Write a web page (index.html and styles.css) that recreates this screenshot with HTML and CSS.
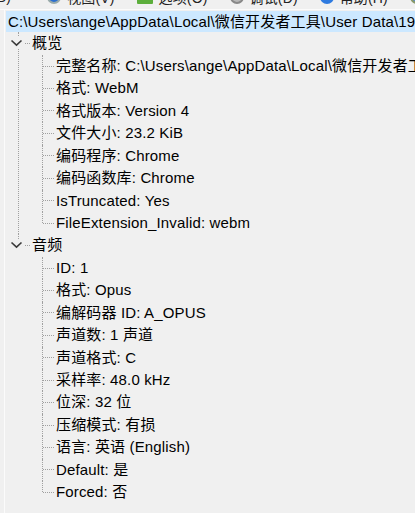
FILE: index.html
```html
<!DOCTYPE html>
<html lang="zh-CN">
<head>
    <meta charset="UTF-8" />
    <title>MediaInfo</title>
    <link rel="stylesheet" href="styles.css">
</head>
<body>
    <div class="toolbar">
        <div class="tools">
            <span class="tool first">(B)</span>
            <span class="tool"><i class="ico ico-view"></i>视图(V)</span>
            <span class="tool"><i class="ico ico-opt"></i>选项(O)</span>
            <span class="tool"><i class="ico ico-gear"></i>调试(D)</span>
            <span class="tool"><i class="ico ico-help"></i>帮助(H)</span>
            <span class="tool"><i class="ico ico-web"></i></span>
        </div>
    </div>
    <div class="panel">
        <div class="root-row"><span class="label selected">C:\Users\ange\AppData\Local\微信开发者工具\User Data\1959e4fd\WeappCache</span></div>
        <ul class="tree level1">
            <li>
                <div class="row">
                    <span class="stub"></span>
                    <span class="twisty"><svg width="16" height="12" viewBox="0 0 16 12"><path d="M2.5 3.5 L7.5 8.2 L12.5 3.5" fill="none" stroke="#3a3a3a" stroke-width="1.6"/></svg></span>
                    <span class="label">概览</span>
                </div>
                <ul class="tree level2">
                    <li><div class="row"><span class="stub"></span><span class="label">完整名称: C:\Users\ange\AppData\Local\微信开发者工具\User Data</span></div></li>
                    <li><div class="row"><span class="stub"></span><span class="label">格式: WebM</span></div></li>
                    <li><div class="row"><span class="stub"></span><span class="label">格式版本: Version 4</span></div></li>
                    <li><div class="row"><span class="stub"></span><span class="label">文件大小: 23.2 KiB</span></div></li>
                    <li><div class="row"><span class="stub"></span><span class="label">编码程序: Chrome</span></div></li>
                    <li><div class="row"><span class="stub"></span><span class="label">编码函数库: Chrome</span></div></li>
                    <li><div class="row"><span class="stub"></span><span class="label">IsTruncated: Yes</span></div></li>
                    <li><div class="row"><span class="stub"></span><span class="label">FileExtension_Invalid: webm</span></div></li>
                </ul>
            </li>
            <li>
                <div class="row">
                    <span class="stub"></span>
                    <span class="twisty"><svg width="16" height="12" viewBox="0 0 16 12"><path d="M2.5 3.5 L7.5 8.2 L12.5 3.5" fill="none" stroke="#3a3a3a" stroke-width="1.6"/></svg></span>
                    <span class="label">音频</span>
                </div>
                <ul class="tree level2">
                    <li><div class="row"><span class="stub"></span><span class="label">ID: 1</span></div></li>
                    <li><div class="row"><span class="stub"></span><span class="label">格式: Opus</span></div></li>
                    <li><div class="row"><span class="stub"></span><span class="label">编解码器 ID: A_OPUS</span></div></li>
                    <li><div class="row"><span class="stub"></span><span class="label">声道数: 1 声道</span></div></li>
                    <li><div class="row"><span class="stub"></span><span class="label">声道格式: C</span></div></li>
                    <li><div class="row"><span class="stub"></span><span class="label">采样率: 48.0 kHz</span></div></li>
                    <li><div class="row"><span class="stub"></span><span class="label">位深: 32 位</span></div></li>
                    <li><div class="row"><span class="stub"></span><span class="label">压缩模式: 有损</span></div></li>
                    <li><div class="row"><span class="stub"></span><span class="label">语言: 英语 (English)</span></div></li>
                    <li><div class="row"><span class="stub"></span><span class="label">Default: 是</span></div></li>
                    <li><div class="row"><span class="stub"></span><span class="label">Forced: 否</span></div></li>
                </ul>
            </li>
        </ul>
    </div>
</body>
</html>
```

FILE: styles.css
```css
*{
    margin:0;
    padding:0;
    list-style:none;
    box-sizing:border-box;
}
html,body{
    width:415px;
    height:513px;
    overflow:hidden;
    background:#f0f0f0;
}
body{
    font-family:"Liberation Sans","Noto Sans CJK SC",sans-serif;
    font-size:15px;
    letter-spacing:0.15px;
    color:#000;
}
.toolbar{
    height:10px;
    overflow:hidden;
    border-bottom:1px solid #fbfbfb;
}
.tools{
    display:flex;
    align-items:center;
    height:20px;
    margin-top:-13px;
    margin-left:-8px;
    white-space:nowrap;
    font-size:14px;
    color:#222;
}
.tool{
    display:flex;
    align-items:center;
    gap:6px;
    margin-right:22px;
}
.tool.first{
    margin-right:36px;
}
.ico{
    display:inline-block;
    width:14px;
    height:14px;
    border-radius:50%;
}
.ico-view{
    background:#2a6fd0;
    border:2px solid #9aa;
}
.ico-opt{
    border-radius:1px;
    background:linear-gradient(#ddd 60%,#5cae3c 60%);
    width:16px;
}
.ico-gear{
    background:#b8b8b8;
    border:2px solid #888;
}
.ico-help{
    background:#2f7be0;
}
.ico-web{
    background:#5b8fc9;
    border:2px solid #8a9a6a;
}
.panel{
    margin-left:4px;
    border-left:1px solid #fbfbfb;
    height:503px;
}
.root-row{
    height:22.45px;
    display:flex;
    align-items:center;
    white-space:nowrap;
}
.label{
    white-space:nowrap;
    line-height:22.45px;
}
.selected{
    margin-left:1px;
    padding-left:2px;
    line-height:21px;
    background:#cce8ff;
}
.level1{
    padding-left:13px;
}
.level2{
    padding-left:23px;
}
.tree li{
    border-left:1px dotted #a0a0a0;
}
.tree li:last-child{
    border-left:1px solid transparent;
}
.row{
    position:relative;
    display:flex;
    height:22.45px;
}
.stub{
    flex-shrink:0;
    width:11px;
    margin-right:2px;
    display:flex;
    flex-direction:column;
}
.stub::before{
    content:"";
    flex:1;
}
.stub::after{
    content:"";
    flex:1;
    border-top:1px dotted #a0a0a0;
}
.tree li:last-child > .row > .stub::before{
    margin-left:-1px;
    border-left:1px dotted #a0a0a0;
}
.twisty{
    position:absolute;
    left:-10px;
    top:5px;
    width:16px;
    height:12px;
    background:#f0f0f0;
}
.twisty svg{
    display:block;
}
```
